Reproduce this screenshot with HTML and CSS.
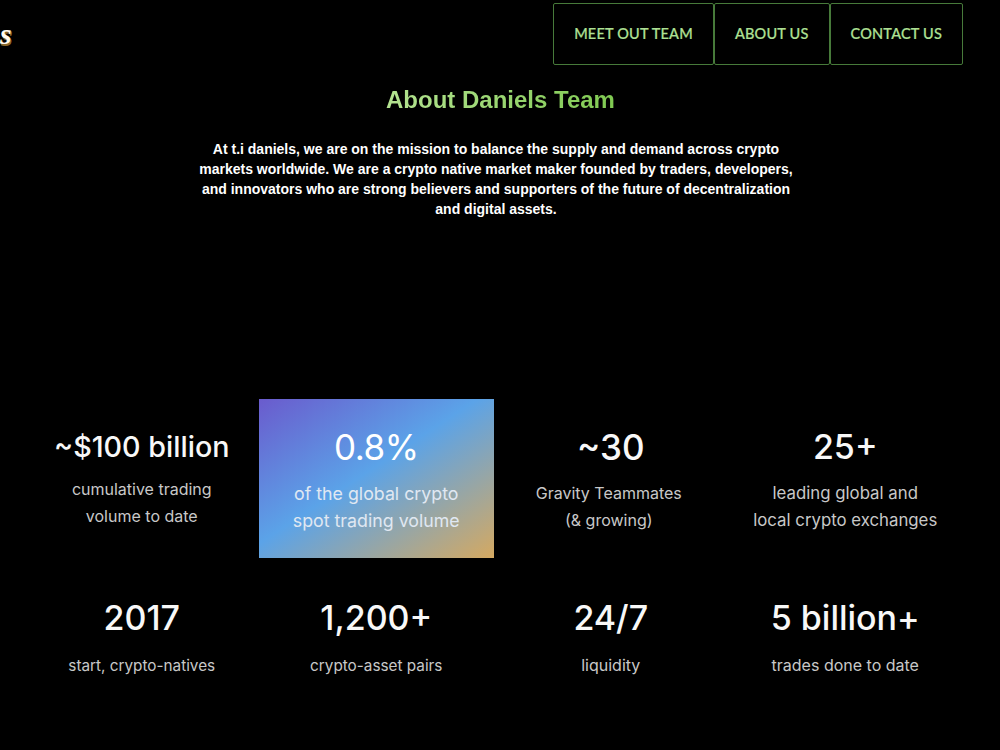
FILE: index.html
```html
<!DOCTYPE html>
<html lang="en">
<head>
    <meta charset="UTF-8">
    <meta name="viewport" content="width=device-width, initial-scale=1.0">
    <title>Daniels Team</title>
    <link rel="stylesheet" href="styles.css">
</head>
<body>

    <header class="header">
        <div class="logo">s</div>
        <nav class="nav">
            <a class="nav-link" href="#team">MEET OUT TEAM</a>
            <a class="nav-link" href="#about">ABOUT US</a>
            <a class="nav-link" href="#contact">CONTACT US</a>
        </nav>
    </header>

    <section class="about" id="about">
        <h2>About Daniels Team</h2>
        <p>At t.i daniels, we are on the mission to balance the supply and demand across crypto<br>
        markets worldwide. We are a crypto native market maker founded by traders, developers,<br>
        and innovators who are strong believers and supporters of the future of decentralization<br>
        and digital assets.</p>
    </section>

    <section class="stats">
        <div class="stat small">
            <h3>~$100 billion</h3>
            <p>cumulative trading<br>volume to date</p>
        </div>
        <div class="stat highlight">
            <h3>0.8%</h3>
            <p>of the global crypto<br>spot trading volume</p>
        </div>
        <div class="stat team">
            <h3>~30</h3>
            <p>Gravity Teammates<br>(&amp; growing)</p>
        </div>
        <div class="stat exchanges">
            <h3>25+</h3>
            <p>leading global and<br>local crypto exchanges</p>
        </div>
        <div class="stat bottom narrow">
            <h3>2017</h3>
            <p>start, crypto-natives</p>
        </div>
        <div class="stat bottom narrow">
            <h3>1,200+</h3>
            <p>crypto-asset pairs</p>
        </div>
        <div class="stat bottom">
            <h3>24/7</h3>
            <p>liquidity</p>
        </div>
        <div class="stat bottom">
            <h3>5 billion+</h3>
            <p>trades done to date</p>
        </div>
    </section>

</body>
</html>
```
FILE: styles.css
```css
* {
    margin: 0;
    padding: 0;
    box-sizing: border-box;
}

body {
    height: 750px;
    background-color: #000;
    color: #fff;
    font-family: "Liberation Sans", Arial, sans-serif;
    overflow: hidden;
}

.header {
    display: flex;
    justify-content: space-between;
    height: 65px;
    padding: 3px 37px 0 0;
}

.logo {
    width: 14px;
    height: 50px;
    padding-top: 14px;
    font-family: "Liberation Serif", serif;
    font-size: 30px;
    font-weight: bold;
    font-style: italic;
    line-height: 34px;
    color: #fffaf0;
    text-shadow: 1px 1px 0 #8a682c, 1px 2px 0 #8a682c;
}

.nav {
    display: flex;
}

.nav-link {
    height: 62px;
    padding: 0 20px;
    border: 1px solid #477a3a;
    border-radius: 2px;
    font-family: Lato, sans-serif;
    font-size: 14.5px;
    font-weight: 500;
    line-height: 59px;
    letter-spacing: 0.2px;
    color: #aee094;
    -webkit-text-stroke: 0.2px #aee094;
    text-decoration: none;
    white-space: nowrap;
}

.about {
    padding-top: 20px;
    text-align: center;
}

.about h2 {
    width: 228px;
    margin: 0 auto 24px;
    font-size: 24px;
    line-height: 30px;
    white-space: nowrap;
    background: linear-gradient(to right, #b4e391, #80ca52);
    -webkit-background-clip: text;
    background-clip: text;
    color: transparent;
}

.about p {
    width: 600px;
    margin: 0 0 0 196px;
    font-size: 14px;
    font-weight: bold;
    line-height: 20px;
    white-space: nowrap;
}

.stats {
    display: grid;
    grid-template-columns: repeat(4, 234.5px);
    grid-template-rows: 159px 150px;
    margin: 180px 0 0 24.5px;
    font-family: Inter, sans-serif;
    text-align: center;
}

.stat {
    padding-top: 27px;
}

.stat h3 {
    font-size: 34px;
    font-weight: 450;
    line-height: 42px;
    color: #f8f8f8;
    white-space: nowrap;
}

.stat p {
    margin-top: 12px;
    font-size: 16px;
    line-height: 27px;
    color: #c8c8c8;
}

.small h3 {
    font-size: 28.7px;
}

.small p {
    margin-top: 8px;
}

.highlight {
    background: linear-gradient(146.5deg, #6a5bcd, #5ba3e8 46%, #d5a961);
}

.highlight h3 {
    font-size: 35px;
    font-weight: 400;
    letter-spacing: -0.5px;
    color: #fff;
}

.highlight p {
    font-size: 17.8px;
    color: #e0e8f2;
}

.team h3 {
    font-size: 35px;
}

.team p {
    padding-right: 4px;
}

.exchanges p {
    font-size: 16.8px;
}

.bottom {
    padding-top: 39px;
}

.bottom p {
    margin-top: 13px;
}

.narrow p {
    font-size: 15.3px;
}
```
